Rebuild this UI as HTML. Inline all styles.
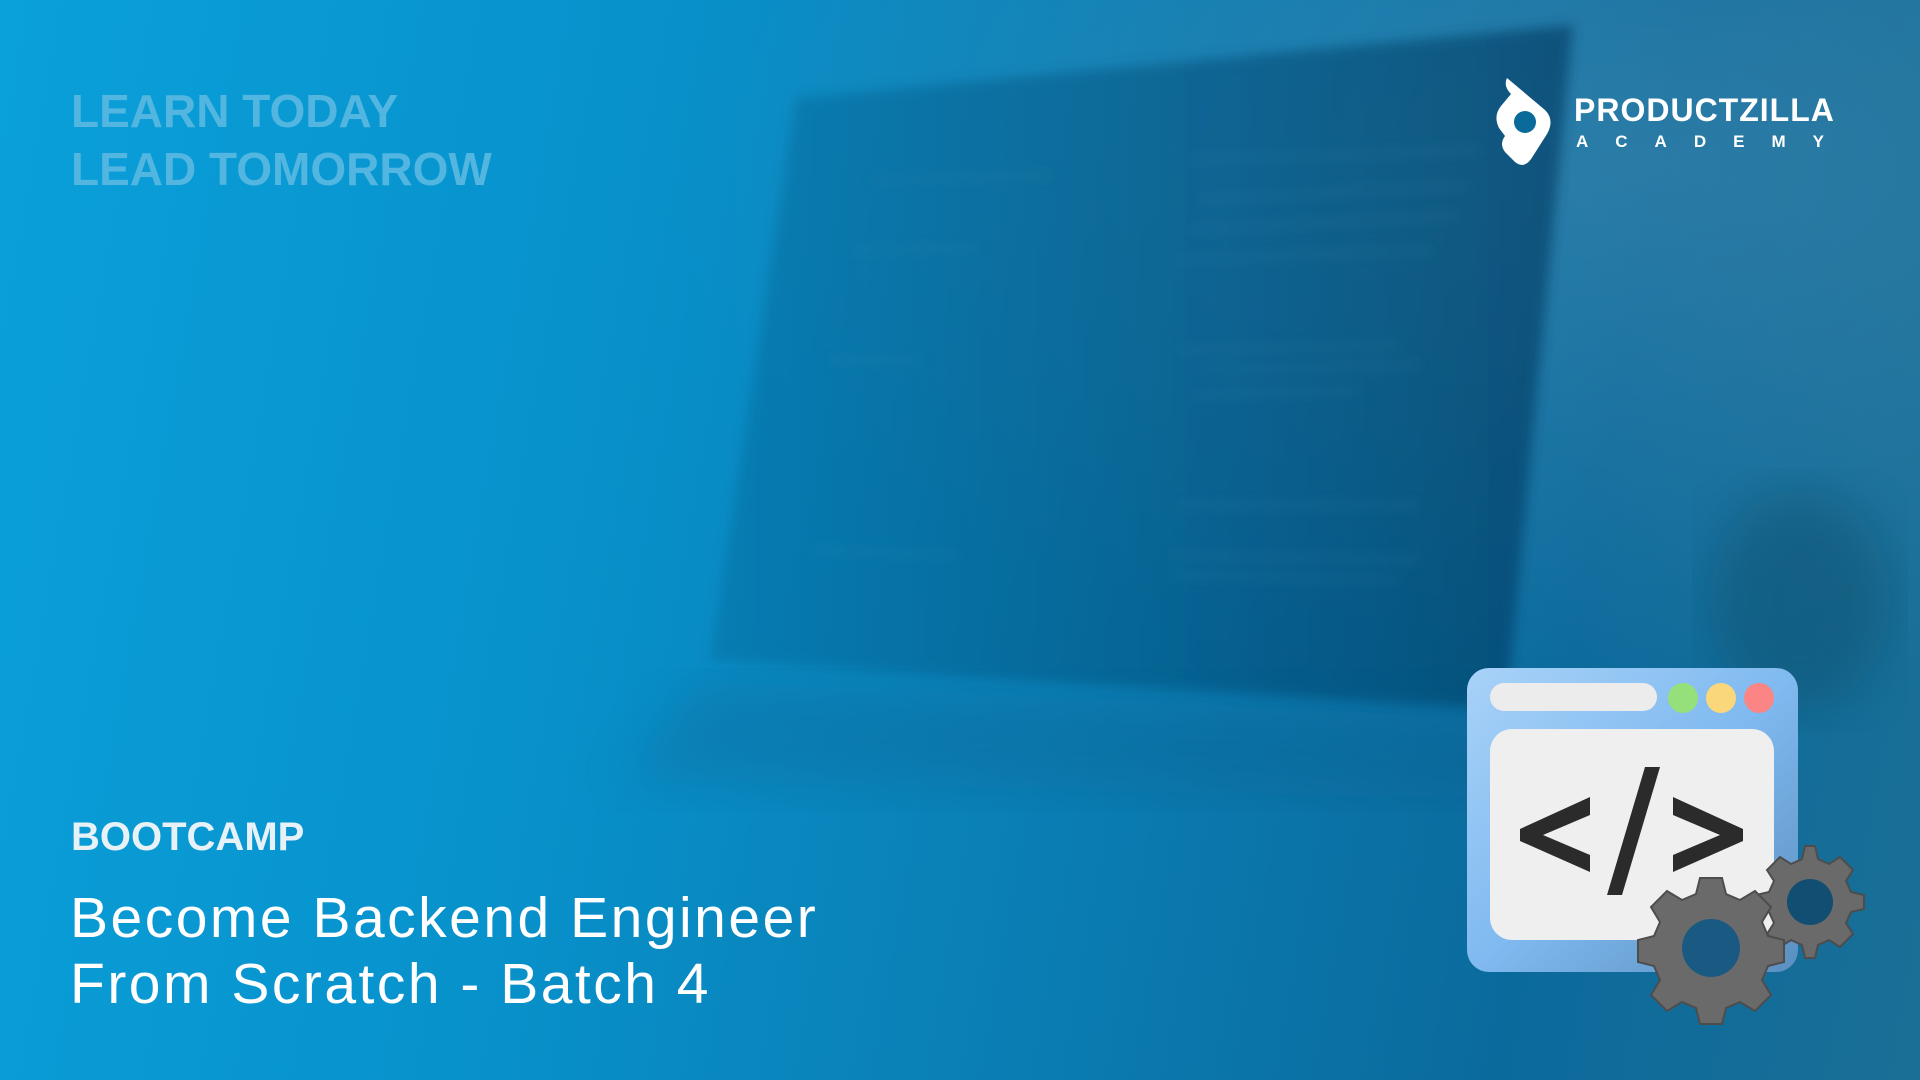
<!DOCTYPE html>
<html><head><meta charset="utf-8"><style>
html,body{margin:0;padding:0}
body{width:1920px;height:1080px;overflow:hidden;position:relative;font-family:"Liberation Sans",sans-serif;
background:linear-gradient(100deg,#0aa0da 0%,#0892cc 30%,#0a7fb5 55%,#0b6a9c 80%,#1a6f96 100%);}
.t{position:absolute;white-space:nowrap}
</style></head><body>
<svg width="1920" height="1080" style="position:absolute;left:0;top:0">
<defs>
<radialGradient id="g1" cx="0.85" cy="0.15" r="0.5"><stop offset="0" stop-color="#4a8db0" stop-opacity="0.5"/><stop offset="1" stop-color="#4a8db0" stop-opacity="0"/></radialGradient>
<linearGradient id="scr" x1="0" y1="0" x2="1" y2="0"><stop offset="0" stop-color="#0a5a8a" stop-opacity="0.3"/><stop offset="1" stop-color="#05385e" stop-opacity="0.6"/></linearGradient>
<filter id="b1"><feGaussianBlur stdDeviation="6"/></filter>
<filter id="b2"><feGaussianBlur stdDeviation="25"/></filter>
</defs>
<rect width="1920" height="1080" fill="url(#g1)"/>
<polygon points="796,98 1573,25 1506,710 710,661" fill="url(#scr)" filter="url(#b1)"/>
<polygon points="700,680 1510,720 1560,800 620,780" fill="#0a5a88" opacity="0.25" filter="url(#b2)"/>
<g stroke="#3d8fae" stroke-width="3" opacity="0.35" filter="url(#b1)">
<line x1="1190" y1="160" x2="1480" y2="150"/><line x1="1200" y1="200" x2="1470" y2="185"/>
<line x1="1190" y1="230" x2="1460" y2="215"/><line x1="1180" y1="260" x2="1430" y2="250"/>
<line x1="1180" y1="350" x2="1400" y2="345"/><line x1="1200" y1="370" x2="1420" y2="365"/>
<line x1="1190" y1="395" x2="1360" y2="390"/><line x1="1180" y1="505" x2="1420" y2="505"/>
<line x1="1170" y1="555" x2="1420" y2="560"/><line x1="1170" y1="575" x2="1400" y2="580"/>
<line x1="870" y1="180" x2="1050" y2="175"/><line x1="850" y1="250" x2="980" y2="248"/>
<line x1="830" y1="360" x2="920" y2="360"/><line x1="810" y1="550" x2="960" y2="555"/>
</g>
<ellipse cx="1800" cy="600" rx="90" ry="110" fill="#0f4a63" opacity="0.4" filter="url(#b2)"/>
</svg>
<div class="t" style="left:71px;top:82px;font-size:46px;font-weight:bold;color:#52b6e0;line-height:58px">LEARN TODAY<br>LEAD TOMORROW</div>
<div class="t" style="left:71px;top:815px;font-size:40px;font-weight:bold;color:#e6f1f8">BOOTCAMP</div>
<div class="t" style="left:70px;top:885px;font-size:57px;color:#fff;line-height:66px;letter-spacing:2.5px">Become Backend Engineer<br>From Scratch - Batch 4</div>
<svg width="70" height="100" style="position:absolute;left:1493px;top:76px" viewBox="0 0 70 100">
<path d="M14 2 L52 34 Q62 44 54 58 L40 80 Q32 94 22 86 L12 76 Q6 68 12 60 L6 52 Q0 40 8 30 L18 18 Q10 10 14 2Z" fill="#fff"/>
<circle cx="32" cy="46" r="11" fill="#0a6a9a"/>
</svg>
<div class="t" style="left:1574px;top:92px;font-size:32px;font-weight:bold;color:#fff;letter-spacing:1px">PRODUCTZILLA</div>
<div class="t" style="left:1576px;top:132px;font-size:17px;font-weight:bold;color:#fff;letter-spacing:27px">ACADEMY</div>
<svg width="420" height="380" style="position:absolute;left:1460px;top:660px" viewBox="1460 660 420 380">
<defs><linearGradient id="wb" x1="0" y1="0" x2="1" y2="1"><stop offset="0" stop-color="#a8d2f8"/><stop offset="0.5" stop-color="#80baf0"/><stop offset="1" stop-color="#5a8fc0"/></linearGradient></defs>
<rect x="1467" y="668" width="331" height="304" rx="22" fill="url(#wb)"/>
<rect x="1490" y="683" width="167" height="28" rx="14" fill="#ececec"/>
<circle cx="1683" cy="698" r="15" fill="#95e07a"/><circle cx="1721" cy="698" r="15" fill="#fbd77c"/><circle cx="1759" cy="698" r="15" fill="#fb8585"/>
<rect x="1490" y="729" width="284" height="211" rx="22" fill="#efefef"/>
<path d="M1590 797 L1590 815 L1543 835 L1590 855 L1590 872 L1520 841 L1520 829Z" fill="#2b2b2b"/>
<path d="M1645 767 L1660 767 L1622 895 L1607 895Z" fill="#2b2b2b"/>
<path d="M1673 797 L1743 829 L1743 841 L1673 872 L1673 855 L1720 835 L1673 815Z" fill="#2b2b2b"/>
<g fill="#6a6a6a" stroke="#4d4d4d" stroke-width="2">
<path d="M1805 846 l10 0 l3 13 l11 5 l11 -7 l13 13 l-7 11 l5 11 l13 3 l0 14 l-13 3 l-5 11 l7 11 l-13 13 l-11 -7 l-11 5 l-3 13 l-10 0 l-3 -13 l-11 -5 l-11 7 l-13 -13 l7 -11 l-5 -11 l-13 -3 l0 -14 l13 -3 l5 -11 l-7 -11 l13 -13 l11 7 l11 -5 l3 -13Z"/>
</g>
<circle cx="1810" cy="902" r="23" fill="#124d72"/>
<g fill="#6a6a6a" stroke="#4d4d4d" stroke-width="2">
<path d="M1700 878 l22 0 l4 16 l14 6 l15 -9 l16 16 l-9 15 l6 14 l16 4 l0 22 l-16 4 l-6 14 l9 15 l-16 16 l-15 -9 l-14 6 l-4 16 l-22 0 l-4 -16 l-14 -6 l-15 9 l-16 -16 l9 -15 l-6 -14 l-16 -4 l0 -22 l16 -4 l6 -14 l-9 -15 l16 -16 l15 9 l14 -6 l4 -16Z"/>
</g>
<circle cx="1711" cy="948" r="29" fill="#1a5a82"/>
</svg>
</body></html>
